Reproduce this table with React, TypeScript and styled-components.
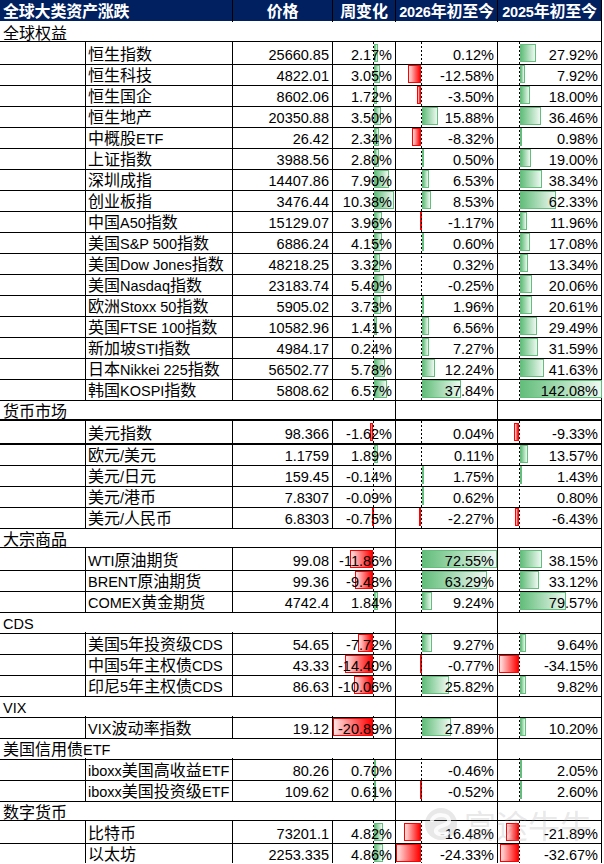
import React from "react";
import styled, { createGlobalStyle } from "styled-components";

const GlobalStyle = createGlobalStyle`
  html, body { margin: 0; padding: 0; background: #fff; }
  body { font-family: "Noto Sans CJK SC", "Liberation Sans", sans-serif; }
`;

const COLS = "86px 147px 100px 63px 102px 104px";

type Bar = { axis: number; scale: number };
const BARS: Bar[] = [
  { axis: 40, scale: 1.93 },
  { axis: 25, scale: 1.03 },
  { axis: 21, scale: 0.575 },
];

type DataRow = [string, string, string, string, string];
type Section = { title: string; lined: boolean; rows: DataRow[] };

const SECTIONS: Section[] = [
  {
    title: "全球权益",
    lined: false,
    rows: [
      ["恒生指数", "25660.85", "2.17%", "0.12%", "27.92%"],
      ["恒生科技", "4822.01", "3.05%", "-12.58%", "7.92%"],
      ["恒生国企", "8602.06", "1.72%", "-3.50%", "18.00%"],
      ["恒生地产", "20350.88", "3.50%", "15.88%", "36.46%"],
      ["中概股ETF", "26.42", "2.34%", "-8.32%", "0.98%"],
      ["上证指数", "3988.56", "2.80%", "0.50%", "19.00%"],
      ["深圳成指", "14407.86", "7.90%", "6.53%", "38.34%"],
      ["创业板指", "3476.44", "10.38%", "8.53%", "62.33%"],
      ["中国A50指数", "15129.07", "3.96%", "-1.17%", "11.96%"],
      ["美国S&P 500指数", "6886.24", "4.15%", "0.60%", "17.08%"],
      ["美国Dow Jones指数", "48218.25", "3.32%", "0.32%", "13.34%"],
      ["美国Nasdaq指数", "23183.74", "5.40%", "-0.25%", "20.06%"],
      ["欧洲Stoxx 50指数", "5905.02", "3.73%", "1.96%", "20.61%"],
      ["英国FTSE 100指数", "10582.96", "1.41%", "6.56%", "29.49%"],
      ["新加坡STI指数", "4984.17", "0.24%", "7.27%", "31.59%"],
      ["日本Nikkei 225指数", "56502.77", "5.78%", "12.24%", "41.63%"],
      ["韩国KOSPI指数", "5808.62", "6.57%", "37.84%", "142.08%"],
    ],
  },
  {
    title: "货币市场",
    lined: true,
    rows: [
      ["美元指数", "98.366", "-1.62%", "0.04%", "-9.33%"],
      ["欧元/美元", "1.1759", "1.89%", "0.11%", "13.57%"],
      ["美元/日元", "159.45", "-0.14%", "1.75%", "1.43%"],
      ["美元/港币", "7.8307", "-0.09%", "0.62%", "0.80%"],
      ["美元/人民币", "6.8303", "-0.75%", "-2.27%", "-6.43%"],
    ],
  },
  {
    title: "大宗商品",
    lined: true,
    rows: [
      ["WTI原油期货", "99.08", "-11.86%", "72.55%", "38.15%"],
      ["BRENT原油期货", "99.36", "-9.48%", "63.29%", "33.12%"],
      ["COMEX黄金期货", "4742.4", "1.84%", "9.24%", "79.57%"],
    ],
  },
  {
    title: "CDS",
    lined: true,
    rows: [
      ["美国5年投资级CDS", "54.65", "-7.72%", "9.27%", "9.64%"],
      ["中国5年主权债CDS", "43.33", "-14.40%", "-0.77%", "-34.15%"],
      ["印尼5年主权债CDS", "86.63", "-10.06%", "25.82%", "9.82%"],
    ],
  },
  {
    title: "VIX",
    lined: true,
    rows: [["VIX波动率指数", "19.12", "-20.89%", "27.89%", "10.20%"]],
  },
  {
    title: "美国信用债ETF",
    lined: true,
    rows: [
      ["iboxx美国高收益ETF", "80.26", "0.70%", "-0.46%", "2.05%"],
      ["iboxx美国投资级ETF", "109.62", "0.61%", "-0.52%", "2.60%"],
    ],
  },
  {
    title: "数字货币",
    lined: true,
    rows: [
      ["比特币", "73201.1", "4.82%", "-16.48%", "-21.89%"],
      ["以太坊", "2253.335", "4.86%", "-24.33%", "-32.67%"],
    ],
  },
];

const Page = styled.div`
  position: relative;
  width: 604px;
  background: #fff;
  color: #000;
  font-size: 16px;
`;

const Row = styled.div<{ $thick?: boolean }>`
  display: grid;
  grid-template-columns: ${COLS};
  height: ${(p) => (p.$thick ? 22 : 21)}px;
  & > * {
    border-bottom: ${(p) => (p.$thick ? 2 : 1)}px solid #000;
  }
`;

const HeaderRow = styled.div`
  display: grid;
  grid-template-columns: ${COLS};
  height: 21px;
  background: #002060;
  width: 602px;
`;

const HeadCell = styled.div<{ $span?: number; $align?: string }>`
  grid-column: span ${(p) => p.$span || 1};
  box-sizing: border-box;
  border-right: 1px solid #000;
  color: #fff;
  font-weight: bold;
  line-height: 20px;
  padding: 0 ${(p) => (p.$align === "left" ? "3px" : "0")};
  text-align: ${(p) => p.$align || "center"};
  white-space: nowrap;
  letter-spacing: -0.2px;
`;

const Cell = styled.div<{ $span?: number; $border?: boolean; $align?: string }>`
  position: relative;
  grid-column: span ${(p) => p.$span || 1};
  box-sizing: border-box;
  border-right: ${(p) => (p.$border === false ? "none" : "1px solid #000")};
  line-height: 18px;
  padding: 2px ${(p) => (p.$align === "right" ? "3px" : "0")} 0
    ${(p) => (p.$align === "right" ? "0" : "2px")};
  text-align: ${(p) => p.$align || "left"};
  white-space: nowrap;
`;

const SectionLabel = styled(Cell)`
  padding-left: 3px;
  overflow: visible;
`;

const Lat = styled.span`
  font-family: "Liberation Sans", "Noto Sans CJK SC", sans-serif;
  font-size: 14.5px;
`;

const Num = styled.span`
  position: relative;
  z-index: 2;
  font-family: "Liberation Sans", sans-serif;
  font-size: 14.5px;
`;

const Axis = styled.div<{ $x: number }>`
  position: absolute;
  top: 0;
  bottom: 0;
  left: ${(p) => p.$x}px;
  width: 1px;
  background: repeating-linear-gradient(
    to bottom,
    #000 0 2px,
    transparent 2px 4px
  );
  z-index: 1;
`;

const DataBar = styled.div<{ $neg: boolean }>`
  position: absolute;
  top: 2px;
  bottom: 2px;
  box-sizing: border-box;
  z-index: 0;
  border: 1px solid ${(p) => (p.$neg ? "#ff0000" : "#63be7b")};
  background: ${(p) =>
    p.$neg
      ? "linear-gradient(to left, #ff0000, #ffe3e3)"
      : "linear-gradient(to right, #63be7b, #eef8f1)"};
`;

const Watermark = styled.div`
  position: absolute;
  left: 424px;
  top: 806px;
  display: flex;
  align-items: center;
  gap: 6px;
  color: rgba(140, 140, 140, 0.2);
  font-size: 32px;
  line-height: 36px;
  font-weight: normal;
  pointer-events: none;
  z-index: 5;
  white-space: nowrap;
`;

function mixed(s: string) {
  const parts = s.split(/([A-Za-z0-9&\/\.% ]+)/).filter((x) => x !== "");
  return parts.map((p, i) =>
    /[A-Za-z0-9&\/\.%]/.test(p) ? <Lat key={i}>{p}</Lat> : <span key={i}>{p}</span>
  );
}

function PctCell({ value, bar }: { value: string; bar: Bar }) {
  const v = parseFloat(value);
  const w = Math.abs(v) * bar.scale;
  const neg = v < 0;
  const show = w >= 0.5;
  const width = Math.max(1, w);
  return (
    <Cell $align="right">
      {show && (
        <DataBar
          $neg={neg}
          style={{ left: neg ? bar.axis - width : bar.axis + 1, width }}
        />
      )}
      <Axis $x={bar.axis} />
      <Num>{value}</Num>
    </Cell>
  );
}

function Logo() {
  return (
    <svg width="34" height="34" viewBox="0 0 34 34">
      <circle cx="17" cy="17" r="16" fill="rgba(140,140,140,0.2)" />
      <path
        d="M8 13 C12 6, 24 7, 25 13 C26 19, 14 18, 12 23 C11 27, 18 29, 24 26"
        stroke="rgba(255,255,255,0.8)"
        strokeWidth="4"
        fill="none"
        strokeLinecap="round"
      />
    </svg>
  );
}

export default function App() {
  return (
    <>
      <GlobalStyle />
      <Page>
        <HeaderRow>
          <HeadCell $span={2} $align="left">全球大类资产涨跌</HeadCell>
          <HeadCell>价格</HeadCell>
          <HeadCell>周变化</HeadCell>
          <HeadCell>
            <Lat>2026</Lat>年初至今
          </HeadCell>
          <HeadCell>
            <Lat>2025</Lat>年初至今
          </HeadCell>
        </HeaderRow>
        {SECTIONS.map((sec) => (
          <React.Fragment key={sec.title}>
            <Row $thick={sec.title === "货币市场"}>
              <SectionLabel $span={4} $border={sec.lined}>
                {mixed(sec.title)}
              </SectionLabel>
              <Cell $border={sec.lined} />
              <Cell />
            </Row>
            {sec.rows.map((r) => (
              <Row key={r[0]} $thick={r[0] === "美元指数"}>
                <Cell />
                <Cell>{mixed(r[0])}</Cell>
                <Cell $align="right">
                  <Num>{r[1]}</Num>
                </Cell>
                <PctCell value={r[2]} bar={BARS[0]} />
                <PctCell value={r[3]} bar={BARS[1]} />
                <PctCell value={r[4]} bar={BARS[2]} />
              </Row>
            ))}
          </React.Fragment>
        ))}
        <Watermark>
          <Logo />
          <span>富途牛牛</span>
        </Watermark>
      </Page>
    </>
  );
}
